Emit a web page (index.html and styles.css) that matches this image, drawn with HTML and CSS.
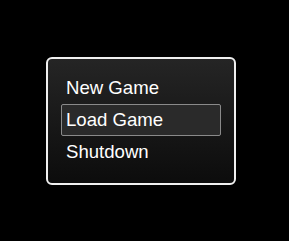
FILE: index.html
```html
<!DOCTYPE html>
<html lang="en">
<head>
    <meta charset="UTF-8">
    <title>Main Menu</title>
    <link rel="stylesheet" href="styles.css">
</head>
<body>
    <div class="menu-panel">
        <div class="menu-item">New Game</div>
        <div class="menu-item menu-selected">Load Game</div>
        <div class="menu-item">Shutdown</div>
    </div>
</body>
</html>
```
FILE: styles.css
```css
* {
    margin: 0;
    padding: 0;
    box-sizing: border-box;
    font-family: 'Liberation Sans', Arial, sans-serif;
}

body {
    background: #000;
    color: #fff;
    width: 289px;
    height: 241px;
    overflow: hidden;
    padding: 57px 0 0 46px;
}

.menu-panel {
    width: 190px;
    height: 128px;
    border: 2px solid #f0f0f0;
    border-radius: 6px;
    background: linear-gradient(to bottom, #252525, #0c0c0c);
    padding: 13px 13px 0 13px;
    display: flex;
    flex-direction: column;
}

.menu-item {
    height: 32px;
    line-height: 30px;
    font-size: 18.6px;
    padding-left: 4px;
    border: 1px solid transparent;
    border-radius: 2px;
}

.menu-selected {
    background: #2a2a2a;
    border-color: #8a8a8a;
}
```
